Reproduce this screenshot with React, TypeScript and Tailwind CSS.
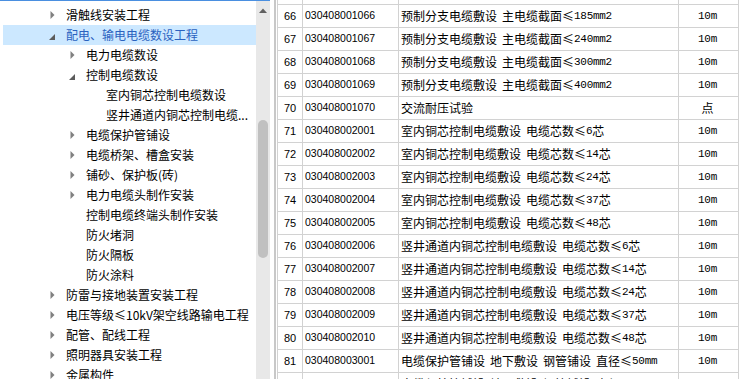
import React from "react";

type TreeItem = { label: string; level: 0 | 1 | 2; arrow: "c" | "e" | null; selected?: boolean };

const tree: TreeItem[] = [
  { label: "滑触线安装工程", level: 0, arrow: "c" },
  { label: "配电、输电电缆数设工程", level: 0, arrow: "e", selected: true },
  { label: "电力电缆数设", level: 1, arrow: "c" },
  { label: "控制电缆数设", level: 1, arrow: "e" },
  { label: "室内铜芯控制电缆数设", level: 2, arrow: null },
  { label: "竖井通道内铜芯控制电缆...", level: 2, arrow: null },
  { label: "电缆保护管铺设", level: 1, arrow: "c" },
  { label: "电缆桥架、槽盒安装", level: 1, arrow: "c" },
  { label: "铺砂、保护板(砖)", level: 1, arrow: "c" },
  { label: "电力电缆头制作安装", level: 1, arrow: "c" },
  { label: "控制电缆终端头制作安装", level: 1, arrow: null },
  { label: "防火堵洞", level: 1, arrow: null },
  { label: "防火隔板", level: 1, arrow: null },
  { label: "防火涂料", level: 1, arrow: null },
  { label: "防雷与接地装置安装工程", level: 0, arrow: "c" },
  { label: "电压等级≤10kV架空线路输电工程", level: 0, arrow: "c" },
  { label: "配管、配线工程", level: 0, arrow: "c" },
  { label: "照明器具安装工程", level: 0, arrow: "c" },
  { label: "金属构件", level: 0, arrow: "c" },
];

const levelPad = ["pl-[44px]", "pl-[64px]", "pl-[84px]"];

const rows: [string, string, string, string][] = [
  ["65", "030408001065", "预制分支电缆敷设 主电缆截面≤150mm2", "10m"],
  ["66", "030408001066", "预制分支电缆敷设 主电缆截面≤185mm2", "10m"],
  ["67", "030408001067", "预制分支电缆敷设 主电缆截面≤240mm2", "10m"],
  ["68", "030408001068", "预制分支电缆敷设 主电缆截面≤300mm2", "10m"],
  ["69", "030408001069", "预制分支电缆敷设 主电缆截面≤400mm2", "10m"],
  ["70", "030408001070", "交流耐压试验", "点"],
  ["71", "030408002001", "室内铜芯控制电缆敷设 电缆芯数≤6芯", "10m"],
  ["72", "030408002002", "室内铜芯控制电缆敷设 电缆芯数≤14芯", "10m"],
  ["73", "030408002003", "室内铜芯控制电缆敷设 电缆芯数≤24芯", "10m"],
  ["74", "030408002004", "室内铜芯控制电缆敷设 电缆芯数≤37芯", "10m"],
  ["75", "030408002005", "室内铜芯控制电缆敷设 电缆芯数≤48芯", "10m"],
  ["76", "030408002006", "竖井通道内铜芯控制电缆敷设 电缆芯数≤6芯", "10m"],
  ["77", "030408002007", "竖井通道内铜芯控制电缆敷设 电缆芯数≤14芯", "10m"],
  ["78", "030408002008", "竖井通道内铜芯控制电缆敷设 电缆芯数≤24芯", "10m"],
  ["79", "030408002009", "竖井通道内铜芯控制电缆敷设 电缆芯数≤37芯", "10m"],
  ["80", "030408002010", "竖井通道内铜芯控制电缆敷设 电缆芯数≤48芯", "10m"],
  ["81", "030408003001", "电缆保护管铺设 地下敷设 钢管铺设 直径≤50mm", "10m"],
  ["82", "030408003002", "电缆保护管铺设 地下敷设 钢管铺设 直径≤80mm", "10m"],
];

function Mixed({ text }: { text: string }) {
  const parts = text.split(/([0-9A-Za-z]+| )/);
  return (
    <>
      {parts.map((p, i) => {
        if (i % 2 === 0) return <span key={i}>{p}</span>;
        if (p === " ") return <span key={i} className="inline-block w-[5px]" />;
        return (
          <span key={i} className="font-['Liberation_Mono',monospace] text-[11px] tracking-[-0.3px]">
            {p}
          </span>
        );
      })}
    </>
  );
}

function Arrow({ kind }: { kind: "c" | "e" | null }) {
  return (
    <div className="w-[10px] h-[20px] flex items-center justify-center shrink-0">
      {kind === "c" && (
        <svg width="5" height="8" viewBox="0 0 5 8">
          <path d="M0.5 0 L4.5 4 L0.5 8 Z" fill="#808080" />
        </svg>
      )}
      {kind === "e" && (
        <svg width="6" height="6" viewBox="0 0 6 6" className="mt-[3px]">
          <path d="M6 0 L6 6 L0 6 Z" fill="#5c5c5c" />
        </svg>
      )}
    </div>
  );
}

export default function App() {
  return (
    <div className="w-[748px] h-[379px] overflow-hidden bg-white flex font-['Noto_Sans_CJK_SC',sans-serif] text-black">
      <div className="w-[270px] shrink-0 flex flex-col">
        <div className="h-[1px] bg-[#4a8fe0]" />
        <div className="flex flex-1 min-h-0">
          <div className="w-[256px] pt-[4px] overflow-hidden">
            {tree.map((t, i) => (
              <div
                key={i}
                className={`h-[20px] ml-[3px] flex items-center ${levelPad[t.level]} ${
                  t.selected ? "bg-[#cce8ff] text-[#2a62bf]" : "text-black"
                }`}
              >
                <Arrow kind={t.arrow} />
                <span className="ml-[9px] text-[12px] leading-[20px] whitespace-nowrap">
                  {t.label}
                </span>
              </div>
            ))}
          </div>
          <div className="w-[14px] bg-[#e8e8e8] flex flex-col items-center">
            <svg width="8" height="5" viewBox="0 0 8 5" className="mt-[7px]">
              <path d="M0 5 L4 0.5 L8 5 Z" fill="#606060" />
            </svg>
            <div className="mt-[107px] w-[10px] h-[138px] rounded-[5px] bg-[#c0c0c0]" />
          </div>
        </div>
      </div>
      <div className="w-[4px] shrink-0" />
      <div className="w-[2px] shrink-0 bg-[#c8c8c8]" />
      <div className="w-[1px] shrink-0" />
      <div className="flex-1 overflow-hidden">
        <div className="mt-[-18px] w-[462px]">
          {rows.map((r, i) => (
            <div key={i} className="h-[23px] flex border-b border-[#d2d2d2]">
              <div className="w-[25px] shrink-0 border-l border-[#d2d2d2] flex items-center justify-center font-['Liberation_Sans',sans-serif] text-[11px]">
                {r[0]}
              </div>
              <div className="w-[96px] shrink-0 border-l border-[#d2d2d2] flex items-center pl-[2px] font-['Liberation_Sans',sans-serif] text-[10.5px]">
                {r[1]}
              </div>
              <div className="w-[280px] shrink-0 border-l border-[#d2d2d2] flex items-center pl-[2px] text-[12px] whitespace-nowrap overflow-hidden">
                <Mixed text={r[2]} />
              </div>
              <div className="w-[61px] shrink-0 border-l border-r border-[#d2d2d2] flex items-center justify-center pr-[2px] text-[12px]">
                <Mixed text={r[3]} />
              </div>
            </div>
          ))}
        </div>
      </div>
    </div>
  );
}
